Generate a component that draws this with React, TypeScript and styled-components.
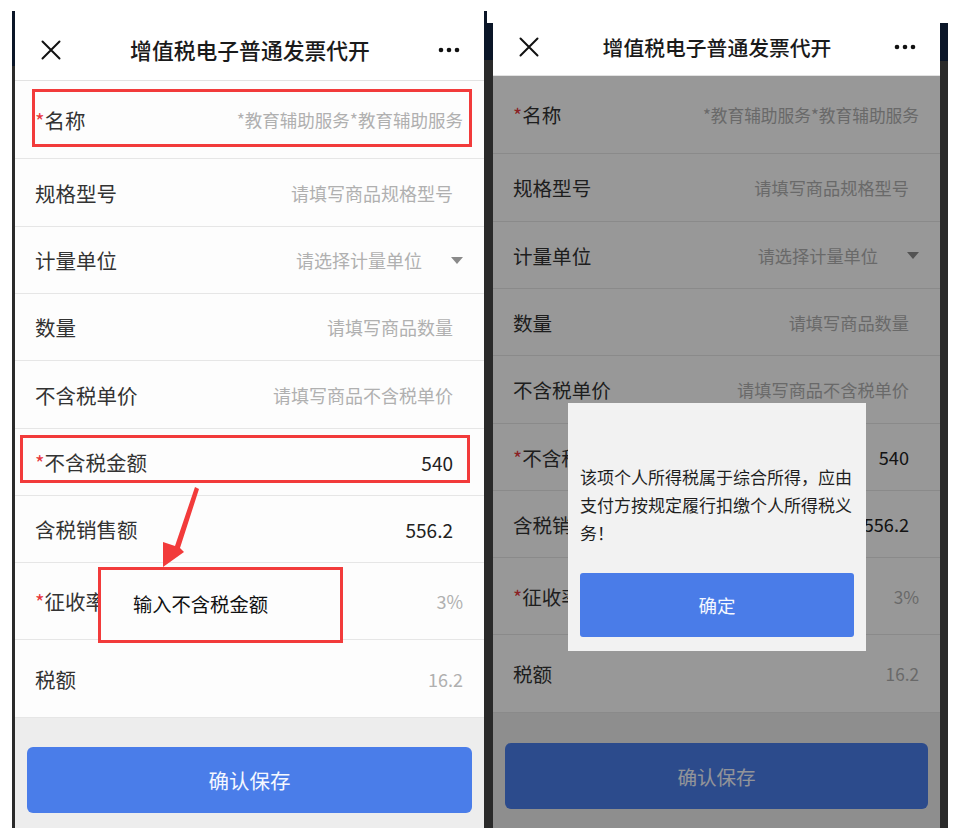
import React from 'react'
import styled, { createGlobalStyle } from 'styled-components'

const GlobalStyle = createGlobalStyle`
  html, body { margin: 0; padding: 0; background: #fff; }
  body { font-family: "Noto Sans CJK SC", "Noto Sans", sans-serif; -webkit-font-smoothing: antialiased; }
`

type Row = { label: string; value: string; required?: boolean; tone: 'hint' | 'text'; inset?: boolean; select?: boolean; small?: boolean; h: number }

const rows: Row[] = [
  { label: '名称', required: true, value: '*教育辅助服务*教育辅助服务', tone: 'hint', small: true, h: 78 },
  { label: '规格型号', value: '请填写商品规格型号', tone: 'hint', inset: true, h: 68 },
  { label: '计量单位', value: '请选择计量单位', tone: 'hint', select: true, h: 67 },
  { label: '数量', value: '请填写商品数量', tone: 'hint', inset: true, h: 67 },
  { label: '不含税单价', value: '请填写商品不含税单价', tone: 'hint', inset: true, h: 68 },
  { label: '不含税金额', required: true, value: '540', tone: 'text', inset: true, h: 67 },
  { label: '含税销售额', value: '556.2', tone: 'text', inset: true, h: 67 },
  { label: '征收率', required: true, value: '3%', tone: 'hint', h: 77 },
  { label: '税额', value: '16.2', tone: 'hint', h: 78 },
]

const Page = styled.div`
  width: 964px;
  height: 839px;
  overflow: hidden;
  display: flex;
  align-items: flex-start;
  padding-left: 12px;
  box-sizing: border-box;
`

const Shot = styled.div<{ $top: number }>`
  display: flex;
  margin-top: ${p => p.$top}px;
  height: ${p => 828 - p.$top}px;
`

const Bezel = styled.div<{ $w: number; $navy: number }>`
  width: ${p => p.$w}px;
  height: 100%;
  background: linear-gradient(to bottom, #0b1628 0, #0b1628 ${p => p.$navy}px, #2a2a2a ${p => p.$navy}px);
`

const Screen = styled.div<{ $w: number; $fs: number }>`
  --fs: ${p => p.$fs};
  position: relative;
  width: ${p => p.$w}px;
  height: 100%;
  display: flex;
  flex-direction: column;
  background: #fdfdfd;
  overflow: hidden;
`

const Header = styled.div<{ $h: number; $padTop: number; $padBottom: number }>`
  height: ${p => p.$h}px;
  box-sizing: border-box;
  padding: ${p => p.$padTop}px 24px ${p => p.$padBottom}px 25px;
  display: flex;
  align-items: center;
  background: #fff;
  border-bottom: 1px solid #e2e2e2;
`

const HeaderSlot = styled.div`
  width: 22px;
  display: flex;
  align-items: center;
  justify-content: center;
`

const Title = styled.div`
  flex: 1;
  text-align: center;
  font-size: calc(var(--fs) * 21.8px);
  font-weight: 500;
  color: #1a1a1a;
`

const FieldRow = styled.div<{ $h: number }>`
  height: ${p => p.$h}px;
  box-sizing: border-box;
  flex-shrink: 0;
  display: flex;
  align-items: center;
  justify-content: space-between;
  padding: 0 21px 0 20px;
  border-bottom: 1px solid #e6e6e6;
  background: #fdfdfd;
`

const Label = styled.div`
  font-size: calc(var(--fs) * 20.5px);
  color: #333;
  white-space: nowrap;
`

const Star = styled.span`
  color: #e8383d;
`

const Value = styled.div<{ $tone: 'hint' | 'text'; $inset?: boolean; $small?: boolean }>`
  display: flex;
  align-items: center;
  gap: 29px;
  margin-right: ${p => (p.$inset ? 10 : 0)}px;
  white-space: nowrap;
  color: ${p => (p.$tone === 'hint' ? '#b0b0b0' : '#222')};
  font-size: calc(var(--fs) * ${p => (p.$tone === 'text' ? 19 : p.$small ? 17.5 : 18)}px);
`

const Caret = styled.span`
  width: 0;
  height: 0;
  border-left: 6px solid transparent;
  border-right: 6px solid transparent;
  border-top: 7px solid #8a8a8a;
`

const Footer = styled.div<{ $padTop: number }>`
  flex: 1;
  background: #ededed;
  padding: ${p => p.$padTop}px 12px 0;
`

const SaveButton = styled.div`
  height: 66px;
  border-radius: 6px;
  background: #4a7de9;
  color: #f4f7ff;
  display: flex;
  align-items: center;
  justify-content: center;
  font-size: calc(var(--fs) * 20.5px);
`

const Dim = styled.div<{ $top: number }>`
  position: absolute;
  left: 0;
  right: 0;
  top: ${p => p.$top}px;
  bottom: 0;
  background: rgba(0, 0, 0, 0.4);
`

const Dialog = styled.div`
  position: absolute;
  left: 75px;
  top: 380px;
  width: 298px;
  height: 248px;
  box-sizing: border-box;
  background: #f2f2f2;
  padding: 60px 12px 14px;
  display: flex;
  flex-direction: column;
`

const DialogText = styled.div`
  font-size: 17px;
  line-height: 28px;
  color: #1f1f1f;
  height: 84px;
`

const DialogButton = styled.div`
  margin-top: 26px;
  height: 64px;
  border-radius: 3px;
  background: #4a7ce8;
  color: #f4f7ff;
  font-size: 18.5px;
  display: flex;
  align-items: center;
  justify-content: center;
`

const Callout = styled.div<{ $x: number; $y: number; $w: number; $h: number; $fill?: boolean }>`
  position: absolute;
  left: ${p => p.$x}px;
  top: ${p => p.$y}px;
  width: ${p => p.$w}px;
  height: ${p => p.$h}px;
  box-sizing: border-box;
  border: 3px solid #f23b3b;
  background: ${p => (p.$fill ? '#fdfdfd' : 'transparent')};
  padding: 20px 0 0 32px;
  font-size: 19.3px;
  color: #111;
`

const Arrow = styled.svg`
  position: absolute;
  left: 140px;
  top: 466px;
`

const CloseIcon = () => (
  <svg width="20" height="20" viewBox="0 0 20 20">
    <path d="M1.5 1.5 L18.5 18.5 M18.5 1.5 L1.5 18.5" stroke="#111" strokeWidth="2" strokeLinecap="round" />
  </svg>
)

const MoreIcon = () => (
  <svg width="22" height="6" viewBox="0 0 22 6">
    <circle cx="3" cy="3" r="2.3" fill="#111" />
    <circle cx="11" cy="3" r="2.3" fill="#111" />
    <circle cx="19" cy="3" r="2.3" fill="#111" />
  </svg>
)

type ScreenProps = {
  width: number
  fs: number
  headerH: number
  headerPadTop: number
  headerPadBottom: number
  footerPadTop: number
  children?: React.ReactNode
}

function InvoiceScreen({ width, fs, headerH, headerPadTop, headerPadBottom, footerPadTop, children }: ScreenProps) {
  return (
    <Screen $w={width} $fs={fs}>
      <Header $h={headerH} $padTop={headerPadTop} $padBottom={headerPadBottom}>
        <HeaderSlot><CloseIcon /></HeaderSlot>
        <Title>增值税电子普通发票代开</Title>
        <HeaderSlot><MoreIcon /></HeaderSlot>
      </Header>
      {rows.map(r => (
        <FieldRow key={r.label} $h={r.h}>
          <Label>{r.required && <Star>*</Star>}{r.label}</Label>
          <Value $tone={r.tone} $inset={r.inset} $small={r.small}>
            {r.value}
            {r.select && <Caret />}
          </Value>
        </FieldRow>
      ))}
      <Footer $padTop={footerPadTop}>
        <SaveButton>确认保存</SaveButton>
      </Footer>
      {children}
    </Screen>
  )
}

export default function App() {
  return (
    <>
      <GlobalStyle />
      <Page>
        <Shot $top={11}>
          <Bezel $w={3} $navy={55} />
          <InvoiceScreen width={469} fs={1} headerH={70} headerPadTop={8} headerPadBottom={0} footerPadTop={29}>
            <Callout $x={17} $y={78} $w={440} $h={58} />
            <Callout $x={5} $y={424} $w={450} $h={48} />
            <Callout $x={83} $y={556} $w={245} $h={76} $fill>输入不含税金额</Callout>
            <Arrow width="50" height="95" viewBox="0 0 50 95">
              <polygon points="40,10 44,12 25,71 29,75 8,90 8,65 20,69" fill="#f23b3b" />
            </Arrow>
          </InvoiceScreen>
          <Bezel $w={3} $navy={49} />
        </Shot>
        <Shot $top={23}>
          <Bezel $w={6} $navy={37} />
          <InvoiceScreen width={447} fs={0.955} headerH={53} headerPadTop={0} headerPadBottom={4} footerPadTop={30}>
            <Dim $top={53} />
            <Dialog>
              <DialogText>该项个人所得税属于综合所得，应由支付方按规定履行扣缴个人所得税义务！</DialogText>
              <DialogButton>确定</DialogButton>
            </Dialog>
          </InvoiceScreen>
          <Bezel $w={8} $navy={38} />
        </Shot>
      </Page>
    </>
  )
}
